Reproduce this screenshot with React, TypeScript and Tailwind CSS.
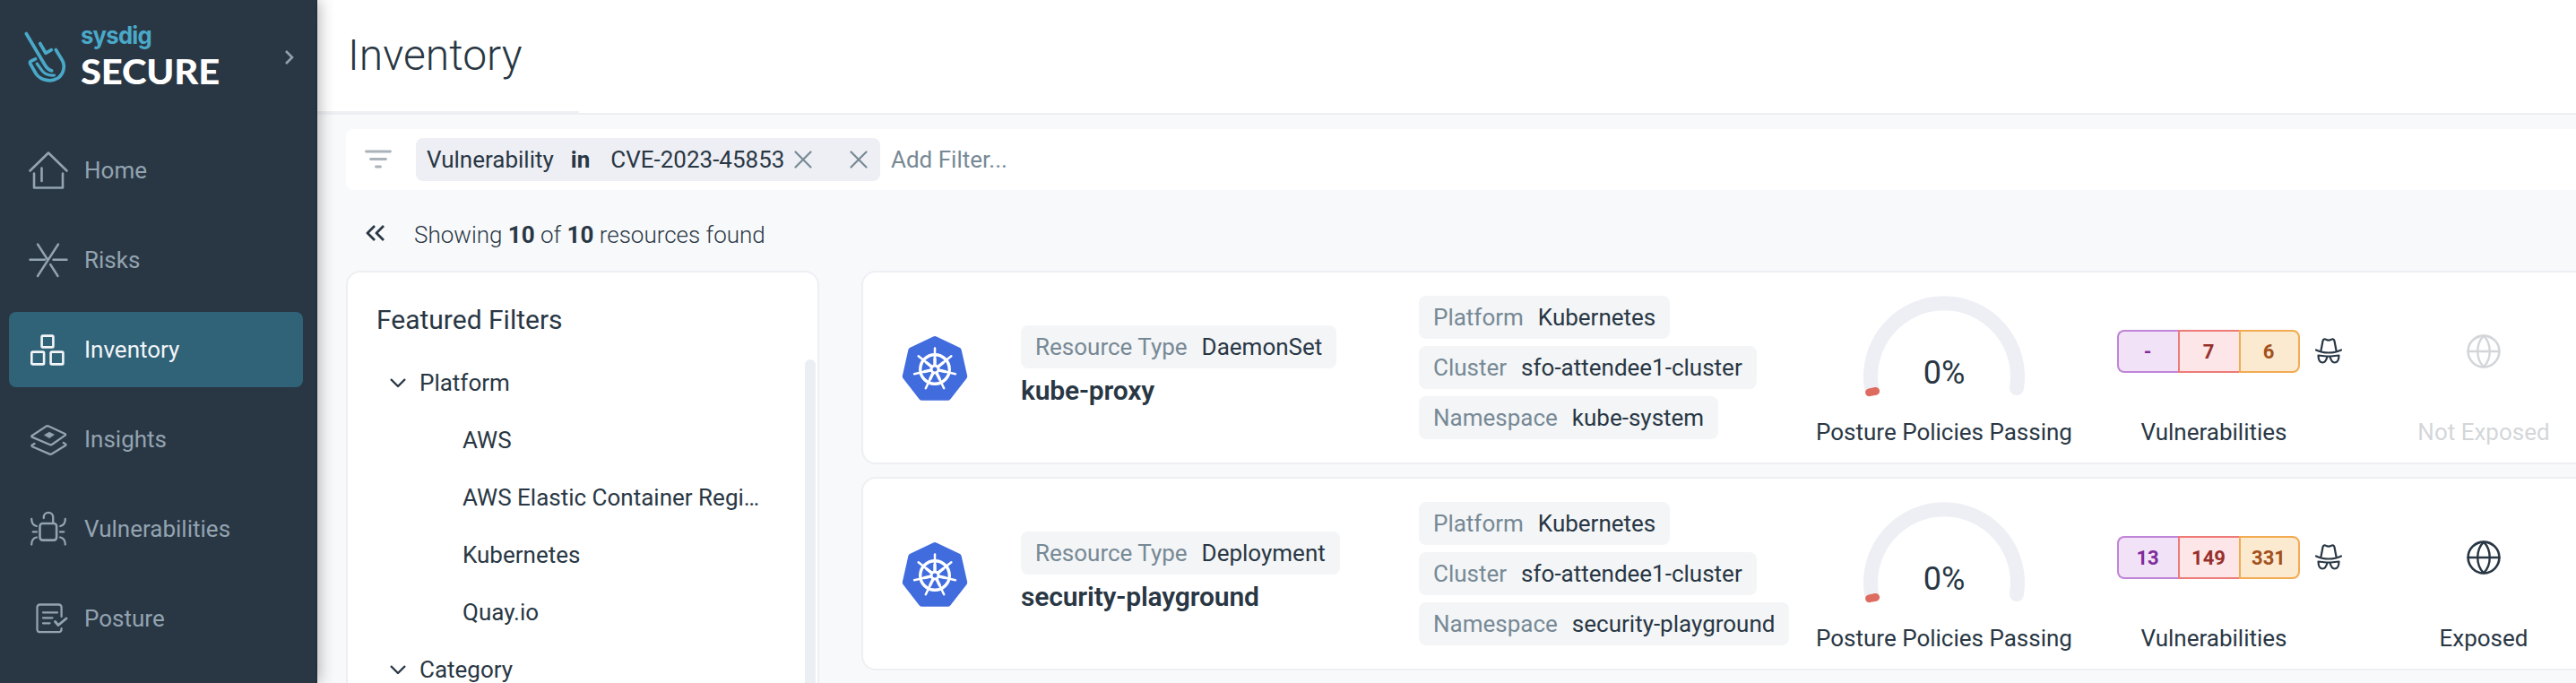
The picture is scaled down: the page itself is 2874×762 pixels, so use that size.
import React from "react";

const S = ({ w, h, children, className = "" }: { w: number; h: number; children: React.ReactNode; className?: string }) => (
  <svg width={w} height={h} viewBox={`0 0 ${w} ${h}`} fill="none" stroke="currentColor" strokeWidth="2.6" strokeLinecap="round" strokeLinejoin="round" className={`shrink-0 ${className}`}>
    {children}
  </svg>
);

const icons: Record<string, React.ReactNode> = {
  Home: <S w={48} h={48}><path d="M3.500 24.500 24 4.500 44.500 24.500M8 27.500v16h32v-16M16.500 21.500v14.500" /></S>,
  Risks: <S w={48} h={48}><path d="M3.500 23.700H20M29.500 23.700h15M12 6.500l11 17M35 6.500 12 42M26.200 29l8.300 13" strokeWidth="2.400" /></S>,
  Inventory: <S w={48} h={48}><rect x="16.600" y="8.600" width="12.800" height="12.800" rx="1.200" /><rect x="5.300" y="26.600" width="13.800" height="13.800" rx="1.200" /><rect x="26.600" y="26.600" width="13.800" height="13.800" rx="1.200" /></S>,
  Insights: <S w={48} h={48}><path d="M21.500 9.600q1.200-.7 2.800-.1L42.500 18q1.200.8.2 1.600L28.200 29.800q-1.200.8-2.800.2L5.800 21.600q-1.200-.8 0-1.600Z" strokeWidth="2.300" /><path d="M8.500 29 5.800 30.600q-1 .8.200 1.600l19.400 8.400q1.300.5 2.600-.3l15-9.300q1-.8 0-1.600L40.800 28" strokeWidth="2.300" /><path d="m19.500 19.300 5.500-3.200 5.600 2.800-5.400 3.800z" fill="currentColor" strokeWidth="0.500" /></S>,
  Vulnerabilities: <S w={48} h={48}><rect x="14.500" y="18" width="18.600" height="18.600" rx="3" /><path d="M18.800 12V11a5.200 5.200 0 0 1 10.400 0v7M5.200 13c0 4.500 2.500 7.300 5.600 8M42.800 13c0 4.500-2.500 7.300-5.600 8M5.200 41.500c0-4.500 2.500-7.300 5.600-8M42.800 41.500c0-4.500-2.500-7.300-5.600-8M6.700 27.300h4.300M37 27.300h4.300" strokeWidth="2.300" /></S>,
  Posture: <S w={48} h={48}><path d="M38.600 22V11.500a3 3 0 0 0-3-3H14.500a3 3 0 0 0-3 3v24.700a3 3 0 0 0 3 3H35.500q3.100 0 3.100-4" strokeWidth="2.300" /><path d="M18 17.300h16M18 23.300H28.500M18 29.300h7.500" strokeWidth="2.300" /><path d="m31.500 27.500 3.500 4 9-7.500" strokeWidth="2.900" /></S>,
};

const nav = ["Home", "Risks", "Inventory", "Insights", "Vulnerabilities", "Posture"];

function Sidebar() {
  return (
    <aside className="relative z-10 flex h-[762px] w-[354px] shrink-0 flex-col border-r-2 border-[#24303c] bg-[#293744] shadow-[2px_0_16px_rgba(0,0,0,0.3)]">
      <div className="flex h-[148px] shrink-0 pl-[26px]">
        <svg width="50" height="60" viewBox="0 0 50 60" fill="none" stroke="#4aa8c8" strokeWidth="3.700" strokeLinecap="round" strokeLinejoin="round" className="mt-[34px] shrink-0">
          <path d="m3.300 3.500 20.200 34c2.500 4.500 5 7 8.200 7.300" />
          <path d="m18.700 14.500 6.300 10.800 6.300-3.600" />
          <path d="m36.300 21.500 7 11.500c4 7 1.500 15.500-4.500 20-7.500 5-19 3-24.500-4.500L8 37.500q-1.500-2.500 1-3.500l4.500-2.200" />
          <path d="m15.200 37 6.300 8.500c3.500 4 7.500 5 13 4.500" strokeWidth="3.200" />
        </svg>
        <div className="ml-[14px] flex w-[226px] flex-col items-start">
          <span className="mt-[24px] block h-[33px] origin-left scale-x-[0.950] font-['Inter','Liberation_Sans',sans-serif] text-[27px] leading-[32px] font-bold tracking-[-0.800px] text-[#4aa8c8]">sysdig</span>
          <span className="block h-[44px] origin-left scale-x-[1.100] font-['Lato','Liberation_Sans',sans-serif] text-[38px] leading-[45px] font-black tracking-[-0.200px] text-white">SECURE</span>
        </div>
        <S w={12} h={18} className="mt-[55px] text-[#93a1ae]"><path d="m3 2 7 7-7 7" strokeLinecap="butt" strokeLinejoin="miter" /></S>
      </div>
      <nav className="flex flex-col gap-4 pl-[10px]">
        {nav.map((n) => (
          <div key={n} className={`flex h-[84px] w-[328px] items-center rounded-lg pl-5 text-[26px] ${n === "Inventory" ? "bg-[#306278] text-[#f2f5f7]" : "text-[#93a3b0]"}`}>
            {icons[n]}
            <span className="ml-4">{n}</span>
          </div>
        ))}
      </nav>
    </aside>
  );
}

const Close = ({ className = "" }: { className?: string }) => (
  <S w={22} h={22} className={`text-[#778995] ${className}`}><path d="m2.500 2.500 17 17M19.500 2.500l-17 17" strokeWidth="2.200" /></S>
);

const Tag = ({ k, v }: { k: string; v: string }) => (
  <div className="flex h-12 w-fit items-center gap-4 rounded-lg bg-[#f3f5f7] px-4 text-[26px] whitespace-nowrap">
    <span className="text-[#778995]">{k}</span>
    <span>{v}</span>
  </div>
);

const spokes = [0, 1, 2, 3, 4, 5, 6].map((i) => (i * 360) / 7);

const Kube = () => (
  <svg width="74" height="74" viewBox="0 0 74 74" className="shrink-0">
    <path d="M37 6 62.800 18.400 69.200 46.800 51.300 69.700H22.700L4.800 46.800 11.200 18.400Z" fill="#416cde" stroke="#416cde" strokeWidth="8" strokeLinejoin="round" />
    <g stroke="#fff" fill="none" strokeLinecap="round">
      <circle cx="37" cy="39" r="16.300" strokeWidth="3.400" />
      {spokes.map((a) => (
        <path key={a} d="M37 35V15.500" strokeWidth="2.500" transform={`rotate(${a} 37 39)`} />
      ))}
      {spokes.map((a) => (
        <path key={a} d="M37 34v-7" strokeWidth="3.300" transform={`rotate(${a} 37 39)`} />
      ))}
      <circle cx="37" cy="39" r="4" strokeWidth="3" />
    </g>
  </svg>
);

const Gauge = () => (
  <div className="relative h-[120px] w-[184px]">
    <svg width="184" height="120" viewBox="0 0 184 120" fill="none">
      <path d="M11 103A82 82 0 1 1 173 103" stroke="#eeeff4" strokeWidth="16" strokeLinecap="round" />
      <path d="m8.500 107.800 7.200-1.400" stroke="#dd6b5f" strokeWidth="8.800" strokeLinecap="round" />
    </svg>
    <span className="absolute inset-x-0 top-[65px] text-center text-[36px] leading-[42px]">0%</span>
  </div>
);

const Hat = () => (
  <S w={32} h={32}>
    <path d="M2 14.500c8 4 20 4 28 0M7.500 15 9.500 4.500c.4-2 2-2.500 3.500-1.700q3 1.500 6 0c1.500-.8 3.100-.3 3.500 1.700L24.500 15M4.500 20.500 13.500 21.500M27.500 20.500 18.500 21.500M4.500 20.500c0 5 2 8 5 8s4-3 5-6.500M27.500 20.500c0 5-2 8-5 8s-4-3-5-6.500M13.500 21.500h5" strokeWidth="2.200" />
  </S>
);

const Globe = () => (
  <S w={40} h={40}><circle cx="20" cy="20" r="17.400" /><path d="M2.600 20h34.800M20 2.600c-9 9-9 26 0 34.800M20 2.600c9 9 9 26 0 34.800" strokeWidth="2.400" /></S>
);

type Row = { type: string; name: string; ns: string; v: [string, string, string]; exposed: boolean };
const rows: Row[] = [
  { type: "DaemonSet", name: "kube-proxy", ns: "kube-system", v: ["-", "7", "6"], exposed: false },
  { type: "Deployment", name: "security-playground", ns: "security-playground", v: ["13", "149", "331"], exposed: true },
];

const Card = ({ r }: { r: Row }) => (
  <article className="flex h-[216px] w-[2000px] shrink-0 rounded-2xl border-2 border-[#eeeff3] bg-white">
    <div className="flex w-[176px] items-center pl-[43px]"><Kube /></div>
    <div className="flex w-[444px] flex-col pt-[59px]">
      <Tag k="Resource Type" v={r.type} />
      <span className="mt-[5px] text-[30px] leading-[40px] font-semibold tracking-[-0.150px]">{r.name}</span>
    </div>
    <div className="flex w-[421px] flex-col gap-2 pt-[26px]">
      <Tag k="Platform" v="Kubernetes" />
      <Tag k="Cluster" v="sfo-attendee1-cluster" />
      <Tag k="Namespace" v={r.ns} />
    </div>
    <div className="flex w-[330px] flex-col items-center pt-[26px] text-[26px]">
      <Gauge />
      <span className="mt-[16px] leading-[32px]">Posture Policies Passing</span>
    </div>
    <div className="flex w-[299px] flex-col text-[26px]">
      <div className="mt-[64px] ml-[28px] flex h-12 items-center text-[22px] font-bold">
        <span className="flex h-12 w-[68px] items-center justify-center rounded-l-lg border-2 border-r-0 border-[#c084d8] bg-[#f1e2f7] pr-[2px] text-[#7f2d9b]">{r.v[0]}</span>
        <span className="flex h-12 w-[68px] items-center justify-center border-2 border-r-0 border-[#ed7b77] bg-[#fce6e8] pr-[2px] text-[#97302c]">{r.v[1]}</span>
        <span className="flex h-12 w-[68px] items-center justify-center rounded-r-lg border-2 border-[#f3ab52] bg-[#fcead0] pr-[2px] text-[#a2511c]">{r.v[2]}</span>
        <span className="ml-4"><Hat /></span>
      </div>
      <span className="mt-[50px] ml-[28px] w-[216px] text-center leading-[32px]">Vulnerabilities</span>
    </div>
    <div className={`flex w-[276px] flex-col items-center pt-[68px] text-[26px] ${r.exposed ? "" : "opacity-20"}`}>
      <Globe />
      <span className="mt-[54px] leading-[32px]">{r.exposed ? "Exposed" : "Not Exposed"}</span>
    </div>
  </article>
);

const Group = ({ name, items }: { name: string; items: string[] }) => (
  <>
    <div className="flex h-16 items-center pl-[44px]">
      <S w={24} h={24}><path d="m4 8 8 8 8-8" strokeWidth="2.400" strokeLinecap="butt" /></S>
      <span className="ml-[12px]">{name}</span>
    </div>
    {items.map((i) => (
      <div key={i} className="h-16 pl-[128px] leading-[64px]"><span className="block w-[334px] truncate">{i}</span></div>
    ))}
  </>
);

export default function App() {
  return (
    <div className="flex h-[762px] w-full overflow-hidden bg-[#f8f9fb] font-['Roboto','Liberation_Sans',sans-serif] text-[#293744]">
      <Sidebar />
      <main className="flex min-w-0 flex-1 flex-col">
        <header className="flex h-[128px] shrink-0 flex-col justify-between bg-white">
          <h1 className="mt-[32px] ml-[34px] text-[48px] leading-[60px] font-light">Inventory</h1>
          <div className="flex h-[4px] items-end">
            <div className="h-[4px] w-[292px] bg-[#eeeff3]" />
            <div className="h-[2px] flex-1 bg-[#eeeff3]" />
          </div>
        </header>
        <div className="mt-4 ml-[32px] flex h-[68px] shrink-0 items-center rounded-l-lg bg-white text-[26px]">
          <S w={30} h={24} className="ml-[21px] text-[#aab2ba]"><path d="M1.500 3h27M6.500 11.500h17M12.500 20h5" strokeWidth="2.800" /></S>
          <div className="ml-[27px] flex h-12 w-[518px] items-center rounded-lg bg-[#eeeff4] pl-[12px]">
            <span>Vulnerability</span>
            <span className="ml-[19px] font-bold">in</span>
            <span className="ml-[23px]">CVE-2023-45853</span>
            <Close className="ml-[10px]" />
            <Close className="ml-[40px]" />
          </div>
          <span className="ml-[12px] text-[#778995]">Add Filter...</span>
        </div>
        <div className="flex h-[90px] shrink-0 items-center pt-[10px] pl-[54px]">
          <S w={22} h={20} className="-mt-1"><path d="M10 2 2 10l8 8M20 2l-8 8 8 8" strokeWidth="2.800" strokeLinecap="butt" /></S>
          <p className="ml-[32px] text-[26px] font-light">Showing <b className="font-bold">10</b> of <b className="font-bold">10</b> resources found</p>
        </div>
        <div className="flex pl-[32px]">
          <section className="flex h-[720px] w-[528px] shrink-0 flex-col rounded-2xl border-2 border-[#eeeff3] bg-white text-[26px]">
            <h2 className="mt-[33px] ml-[32px] h-[58px] shrink-0 text-[30px] leading-[40px]">Featured Filters</h2>
            <div className="flex">
              <div className="w-[510px]">
                <Group name="Platform" items={["AWS", "AWS Elastic Container Registry", "Kubernetes", "Quay.io"]} />
                <Group name="Category" items={[]} />
              </div>
              <div className="mt-[6px] h-[600px] w-3 rounded-full bg-[#ebeff3]" />
            </div>
          </section>
          <section className="ml-[47px] flex flex-col gap-[14px]">
            {rows.map((r) => <Card key={r.name} r={r} />)}
          </section>
        </div>
      </main>
    </div>
  );
}
